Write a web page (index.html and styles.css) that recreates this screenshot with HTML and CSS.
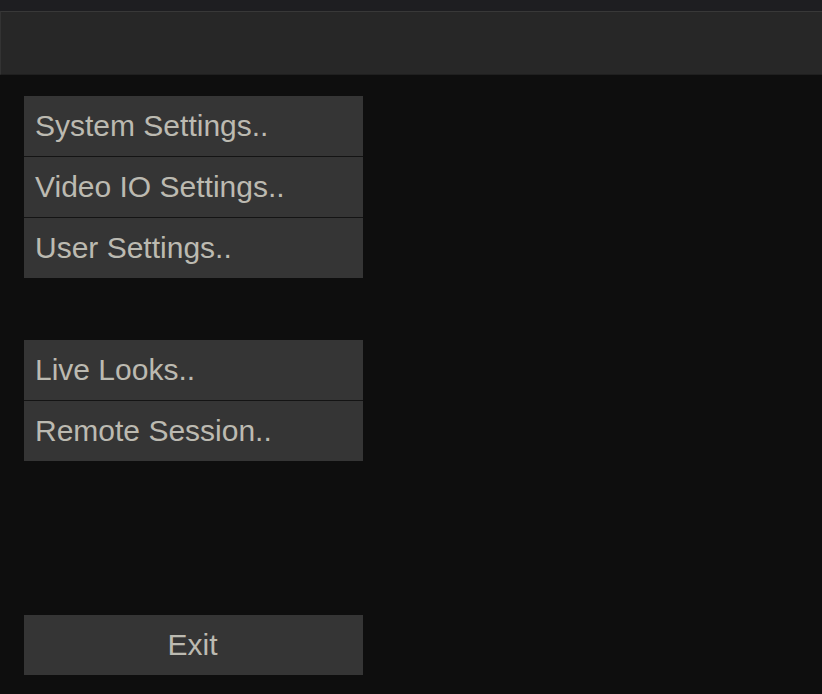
FILE: index.html
```html
<!DOCTYPE html>
<html>
<head>
<meta charset="utf-8">
<link rel="stylesheet" href="styles.css">
</head>
<body>
<div class="topstrip"></div>
<div class="header"></div>
<div class="menu">
  <div class="group">
    <div class="item">System Settings..</div>
    <div class="item">Video IO Settings..</div>
    <div class="item">User Settings..</div>
  </div>
  <div class="group group-second">
    <div class="item">Live Looks..</div>
    <div class="item">Remote Session..</div>
  </div>
  <div class="group group-exit">
    <div class="item item-center">Exit</div>
  </div>
</div>
</body>
</html>
```
FILE: styles.css
```css
html, body {
  margin: 0;
  padding: 0;
  background: #0e0e0e;
  width: 822px;
  height: 694px;
  overflow: hidden;
  font-family: "Liberation Sans", Arial, sans-serif;
}
.topstrip {
  height: 11px;
  background: #1e1e21;
}
.header {
  height: 62px;
  background: #272727;
  border-top: 1px solid #383838;
  border-left: 1px solid #333333;
  border-bottom: 1px solid #1f1f1f;
}
.menu {
  display: flex;
  flex-direction: column;
  padding: 21px 0 0 24px;
}
.group {
  width: 339px;
  display: flex;
  flex-direction: column;
  gap: 1px;
  background: #141414;
}
.group-second {
  margin-top: 62px;
}
.group-exit {
  margin-top: 154px;
}
.item {
  height: 60px;
  background: #353535;
  color: #bcbab1;
  font-size: 30px;
  line-height: 60px;
  padding-left: 11px;
  box-sizing: border-box;
  white-space: nowrap;
}
.item-center {
  padding-left: 0;
  padding-right: 2px;
  text-align: center;
}
```
